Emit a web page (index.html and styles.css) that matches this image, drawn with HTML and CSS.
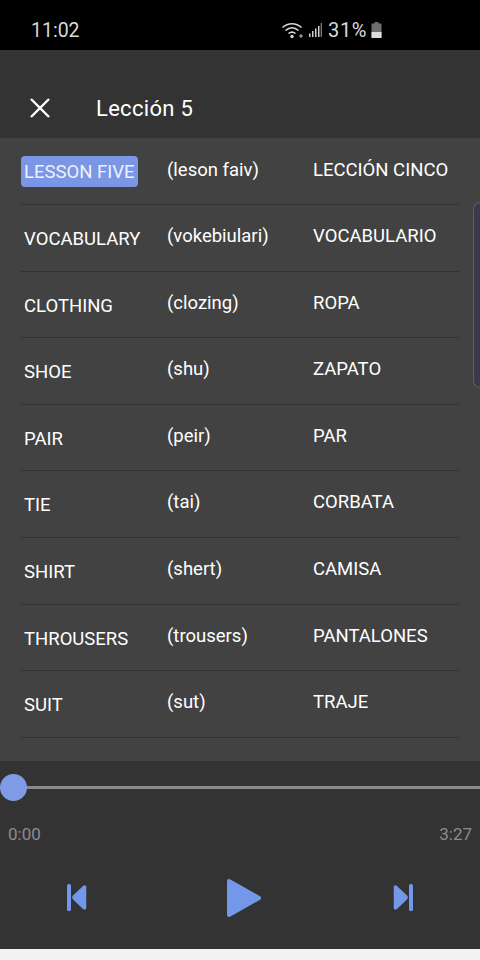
FILE: index.html
```html
<!DOCTYPE html>
<html lang="es">
<head>
<meta charset="utf-8">
<title>Lección 5</title>
<link rel="stylesheet" href="styles.css">
</head>
<body>
<div class="screen">
  <div class="status">
    <span class="clock">11:02</span>
    <div class="status-right">
      <svg class="wifi" viewBox="0 0 24 18" width="24" height="18"><path d="M1.500 6.500C7 1.500 15 1.500 20.500 6.500M4.500 9.500C8.500 6 13.500 6 17.500 9.500M7.500 12.500C9.800 10.600 12.200 10.600 14.500 12.500" fill="none" stroke="#d8d8d8" stroke-width="1.600"/><circle cx="11" cy="15.500" r="1.700" fill="#d8d8d8"/><path d="M18 15h4M20 13v4" stroke="#bbb" stroke-width="1"/></svg>
      <svg class="signal" viewBox="0 0 14 14" width="14" height="14"><path d="M1 10.500h1.500V14H1zM4 8h1.500v6H4zM7 5.500h1.500V14H7zM10 3h1.500v11H10zM12.800 0h.8v14h-.8z" fill="#cfcfcf"/></svg>
      <span class="pct">31%</span>
      <svg class="battery" viewBox="0 0 11 16" width="11" height="16"><path d="M3.500 0h4v1.500h3V16H.5V1.500h3z" fill="#6e6e6e"/><path d="M.5 10h10v6H.5z" fill="#dcdcdc"/></svg>
    </div>
  </div>
  <header class="topbar">
    <svg class="close" viewBox="0 0 22 22" width="22" height="22"><path d="M2 2l18 18M20 2L2 20" stroke="#fff" stroke-width="2.400" fill="none"/></svg>
    <h1 class="title">Lección 5</h1>
  </header>
  <main class="list">
    <div class="row"><span class="en"><span class="hl">LESSON FIVE</span></span><span class="ph">(leson faiv)</span><span class="es">LECCIÓN CINCO</span></div>
    <div class="row"><span class="en">VOCABULARY</span><span class="ph">(vokebiulari)</span><span class="es">VOCABULARIO</span></div>
    <div class="row"><span class="en">CLOTHING</span><span class="ph">(clozing)</span><span class="es">ROPA</span></div>
    <div class="row"><span class="en">SHOE</span><span class="ph">(shu)</span><span class="es">ZAPATO</span></div>
    <div class="row"><span class="en">PAIR</span><span class="ph">(peir)</span><span class="es">PAR</span></div>
    <div class="row"><span class="en">TIE</span><span class="ph">(tai)</span><span class="es">CORBATA</span></div>
    <div class="row"><span class="en">SHIRT</span><span class="ph">(shert)</span><span class="es">CAMISA</span></div>
    <div class="row"><span class="en">THROUSERS</span><span class="ph">(trousers)</span><span class="es">PANTALONES</span></div>
    <div class="row"><span class="en">SUIT</span><span class="ph">(sut)</span><span class="es">TRAJE</span></div>
    <div class="handle"></div>
  </main>
  <section class="player">
    <div class="track"><div class="line"></div><div class="thumb"></div></div>
    <div class="times"><span>0:00</span><span>3:27</span></div>
    <div class="controls">
      <svg viewBox="0 0 20 28" width="20" height="28"><rect x="0" y="0" width="4" height="27" rx="1.500" fill="#7398ea"/><path d="M17.500 3V24L7.500 14.500Q6.500 13.500 7.500 12.500Z" fill="#7398ea" stroke="#7398ea" stroke-width="3.500" stroke-linejoin="round"/></svg>
      <svg class="play" viewBox="0 0 36 40" width="36" height="40"><path d="M3 3L33 20L3 37Z" fill="#7398ea" stroke="#7398ea" stroke-width="4" stroke-linejoin="round"/></svg>
      <svg viewBox="0 0 20 28" width="20" height="28"><path d="M2.500 3V24L12.500 14.500Q13.500 13.500 12.500 12.500Z" fill="#7398ea" stroke="#7398ea" stroke-width="3.500" stroke-linejoin="round"/><rect x="16" y="0" width="4" height="27" rx="1.500" fill="#7398ea"/></svg>
    </div>
  </section>
  <div class="navstrip"></div>
</div>
</body>
</html>
```
FILE: styles.css
```css
* { box-sizing: border-box; }
html, body { margin: 0; padding: 0; background: #f2f2f2; }
.screen {
  width: 480px;
  height: 960px;
  display: flex;
  flex-direction: column;
  overflow: hidden;
  font-family: Roboto, "Liberation Sans", sans-serif;
  color: #fff;
}
.status {
  height: 50px;
  flex: none;
  background: #000;
  display: flex;
  align-items: center;
  justify-content: space-between;
  padding: 10px 98px 0 31px;
  color: #d8d8d8;
  font-size: 20px;
}
.clock { font-size: 19.5px; }
.status-right { display: flex; align-items: center; gap: 3px; }
.pct { margin-left: 3px; letter-spacing: 0.6px; }
.battery { margin-left: 1px; }
.topbar {
  height: 88px;
  flex: none;
  background: #333;
  display: flex;
  align-items: center;
  padding: 28px 0 0 29px;
  gap: 45px;
}
.close { display: block; }
.title { margin: 0; font-size: 22px; font-weight: 400; letter-spacing: 0.3px; }
.list {
  height: 623px;
  flex: none;
  background: #424242;
  padding: 0.5px 21px 0;
  position: relative;
}
.row {
  height: 66.6px;
  display: grid;
  grid-template-columns: 146px 146px 1fr;
  border-bottom: 1.5px solid #333;
  font-size: 18.5px;
  line-height: 22px;
}
.row span { white-space: nowrap; }
.en { padding: 23px 0 0 3px; }
.ph { padding: 20px 0 0 0; }
.es { padding: 20px 0 0 0; }
.row:first-child .en { padding-top: 22px; }
.hl {
  display: inline-block;
  background: #7a96e4;
  border-radius: 4px;
  margin: -5px 0 0 -3px;
  padding: 5px 3px 4px;
  color: #eef2ff;
}
.handle {
  position: absolute;
  right: 0;
  top: 64px;
  width: 7px;
  height: 186px;
  background: #3a3a4c;
  border: 1.5px solid #5e5e68;
  border-right: 0;
  border-radius: 7px 0 0 7px;
}
.player {
  height: 188px;
  flex: none;
  background: #333;
  display: flex;
  flex-direction: column;
}
.track { position: relative; height: 52px; flex: none; }
.line { position: absolute; left: 0; right: 0; top: 25px; height: 3px; background: #8a8a8a; }
.thumb { position: absolute; left: 0; top: 13px; width: 27px; height: 27px; border-radius: 50%; background: #7f9be6; }
.times {
  display: flex;
  justify-content: space-between;
  padding: 11px 8px 0;
  font-size: 17px;
  line-height: 20px;
  color: #8c8c8c;
}
.controls {
  display: flex;
  justify-content: space-between;
  align-items: center;
  padding: 34px 67px 0;
}
.play { margin-left: 7px; }
.navstrip { flex: 1; background: #f2f2f2; }
```
